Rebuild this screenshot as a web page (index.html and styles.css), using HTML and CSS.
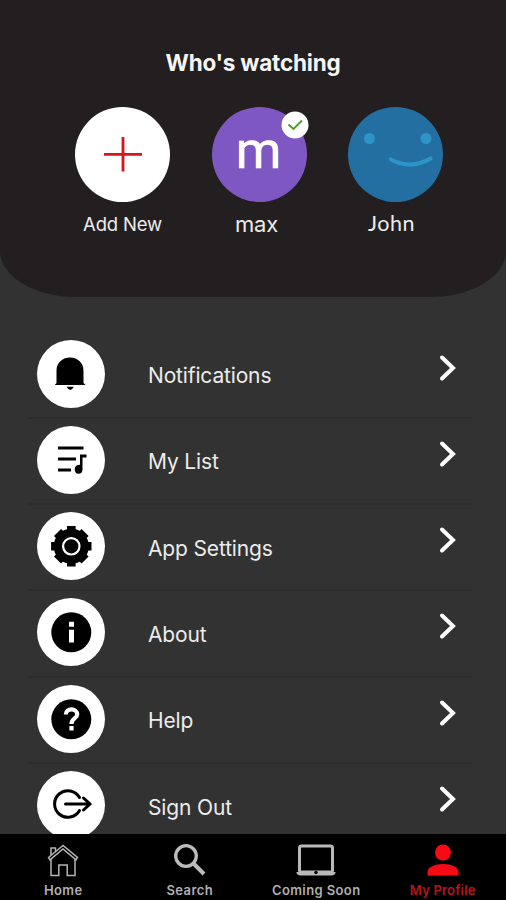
FILE: index.html
```html
<!DOCTYPE html>
<html lang="en">
    <head>
        <meta charset="UTF-8" />
        <meta name="viewport" content="width=device-width, initial-scale=1.0" />
        <title>My Profile</title>
        <link rel="stylesheet" href="styles.css">
    </head>
    <body>
        <header class="profiles">
            <h1 class="title">Who's watching</h1>
            <div class="profile-list">
                <div class="profile">
                    <div class="avatar add">
                        <svg width="40" height="36" viewBox="0 0 40 36"><path d="M1 17.300H39M20 0V34.500" stroke="#d8141c" stroke-width="2.800" /></svg>
                    </div>
                    <span class="name">Add New</span>
                </div>
                <div class="profile">
                    <div class="avatar max">
                        <span class="letter">m</span>
                        <svg class="badge" width="28" height="28" viewBox="0 0 28 28"><circle cx="14" cy="14" r="13.500" fill="#fff" /><path d="M7.500 13.500L12.500 18L21 9.500" fill="none" stroke="#4f9a2c" stroke-width="1.900" /></svg>
                    </div>
                    <span class="name name-max">max</span>
                </div>
                <div class="profile">
                    <div class="avatar john">
                        <svg width="95" height="95" viewBox="0 0 95 95"><g fill="#2e93c6"><circle cx="21.500" cy="31.500" r="5.500" /><circle cx="78" cy="31.500" r="5.500" /></g><path d="M43 52.500Q63 63 82.500 51.500" fill="none" stroke="#2e93c6" stroke-width="4.200" stroke-linecap="round" /></svg>
                    </div>
                    <span class="name name-john">John</span>
                </div>
            </div>
        </header>

        <ul class="menu">
            <li class="item">
                <span class="icon">
                    <svg width="68" height="68" viewBox="0 0 68 68"><path d="M19.500 43V31C19.500 22 26 17.500 33 17.500S46.500 22 46.500 31V43L48.500 45H17.800ZM29.500 46.800H37Q35 50 33.200 50T29.500 46.800Z" /></svg>
                </span>
                <span class="label">Notifications</span>
                <svg class="arrow" width="18" height="28" viewBox="0 0 18 28"><path d="M3 3.500L14 14L3 24.500" /></svg>
            </li>
            <li class="item">
                <span class="icon">
                    <svg width="68" height="68" viewBox="0 0 68 68"><path d="M21 22H46.500M21 33H39M21 44H34" fill="none" stroke="#000" stroke-width="2.800" /><path d="M43 28.500H49.500V31.500H45.500V43.500Q45.300 47.700 41.500 47.700T37.700 43Q38 38.800 43 38.700Z" /></svg>
                </span>
                <span class="label">My List</span>
                <svg class="arrow" width="18" height="28" viewBox="0 0 18 28"><path d="M3 3.500L14 14L3 24.500" /></svg>
            </li>
            <li class="item">
                <span class="icon">
                    <svg width="68" height="68" viewBox="0 0 68 68">
                        <g transform="translate(34.300 34.300)">
                            <circle r="17.600" />
                            <!-- teeth -->
                            <g stroke="#000" stroke-width="8.600" stroke-linecap="butt">
                                <path d="M0 -20.200V20.200M-20.200 0H20.200" />
                                <path d="M0 -19.500V19.500M-19.500 0H19.500" stroke-width="10" transform="rotate(45)" />
                            </g>
                            <circle r="8.200" stroke="#fff" stroke-width="2.200" />
                        </g>
                    </svg>
                </span>
                <span class="label">App Settings</span>
                <svg class="arrow" width="18" height="28" viewBox="0 0 18 28"><path d="M3 3.500L14 14L3 24.500" /></svg>
            </li>
            <li class="item">
                <span class="icon">
                    <svg width="68" height="68" viewBox="0 0 68 68"><circle cx="34.300" cy="34.300" r="20" /><path d="M34.500 23.800V28.800M34.500 31.800V44.500" stroke="#fff" stroke-width="5" /></svg>
                </span>
                <span class="label">About</span>
                <svg class="arrow" width="18" height="28" viewBox="0 0 18 28"><path d="M3 3.500L14 14L3 24.500" /></svg>
            </li>
            <li class="item">
                <span class="icon">
                    <svg width="68" height="68" viewBox="0 0 68 68"><circle cx="34.300" cy="34.300" r="20" /><path d="M28.800 29.500C28.800 22.500 40.200 23 40.200 29.500C40.200 33.500 34.500 33 34.500 39M34.500 41V45.500" fill="none" stroke="#fff" stroke-width="4.200" /></svg>
                </span>
                <span class="label">Help</span>
                <svg class="arrow" width="18" height="28" viewBox="0 0 18 28"><path d="M3 3.500L14 14L3 24.500" /></svg>
            </li>
            <li class="item">
                <span class="icon">
                    <svg width="68" height="68" viewBox="0 0 68 68"><path d="M42.500 26.500A13.300 13.300 0 1 0 42.500 39.500M28.500 33H53M46.500 27L53 33L46.500 39" fill="none" stroke="#000" stroke-width="3" stroke-linecap="round" /></svg>
                </span>
                <span class="label">Sign Out</span>
                <svg class="arrow" width="18" height="28" viewBox="0 0 18 28"><path d="M3 3.500L14 14L3 24.500" /></svg>
            </li>
        </ul>

        <nav class="tabs">
            <a class="tab">
                <svg width="40" height="36" viewBox="0 0 40 36"><g fill="none" stroke="#b5b5b5" stroke-width="1.500"><path d="M5.500 16.500L20 4.500L34.500 16.500L33 18.800L20 8L7 18.800Z" /><path d="M8 18V34.500H15.800V24H24.200V34.500H32V18M8 14V7H12.500V10" /></g></svg>
                <span>Home</span>
            </a>
            <a class="tab">
                <svg width="40" height="36" viewBox="0 0 40 36"><circle cx="16" cy="15" r="10.300" fill="none" stroke="#bcbcbc" stroke-width="3.300" /><path d="M23.500 22.500L34 33" stroke="#bcbcbc" stroke-width="4" /></svg>
                <span>Search</span>
            </a>
            <a class="tab">
                <svg width="40" height="36" viewBox="0 0 40 36"><rect x="3.500" y="5" width="33" height="26" rx="2" fill="none" stroke="#b9b9b9" stroke-width="3" /><path d="M.3 31H39.700Q39 34.500 35 34.500H5Q1 34.500 .3 31Z" fill="#b9b9b9" /><circle cx="20" cy="31.500" r="1.700" fill="#000" /></svg>
                <span>Coming Soon</span>
            </a>
            <a class="tab active">
                <svg width="40" height="36" viewBox="0 0 40 36"><g fill="#f80a15"><circle cx="20" cy="11.500" r="8" /><path d="M4.500 34.500V31C4.500 26 12 23 20 23S35.500 26 35.500 31V34.500Z" /></g></svg>
                <span>My Profile</span>
            </a>
        </nav>
    </body>
</html>
```
FILE: styles.css
```css
* {
    box-sizing: border-box;
}
body {
    margin: 0;
    height: 900px;
    overflow: hidden;
    display: flex;
    flex-direction: column;
    background: #323232;
    color: #ececec;
    font-family: Inter, "Liberation Sans", sans-serif;
}
svg {
    display: block;
    flex: none;
}

/* profiles */
.profiles {
    flex: none;
    height: 297px;
    padding-top: 48px;
    background: #231f20;
    border-radius: 0 0 76px 76px / 0 0 46px 46px;
}
.title {
    margin: 0;
    font-size: 22.5px;
    line-height: 29px;
    font-weight: 700;
    letter-spacing: -0.2px;
    text-align: center;
    color: #f5f5f5;
}
.profile-list {
    display: flex;
    justify-content: center;
    gap: 41.5px;
    margin-top: 30px;
    margin-left: 12px;
}
.profile {
    width: 95px;
    display: flex;
    flex-direction: column;
    align-items: center;
}
.avatar {
    position: relative;
    width: 95px;
    height: 95px;
    border-radius: 50%;
    display: flex;
    align-items: center;
    justify-content: center;
}
.add {
    background: #fff;
}
.max {
    background: #7e57c2;
}
.john {
    background: #236fa1;
}
.letter {
    color: #fff;
    font-family: Roboto, sans-serif;
    font-size: 52px;
    font-weight: 400;
    line-height: 60px;
    padding: 0 1px 7px 0;
    -webkit-text-stroke: 0.7px #fff;
}
.badge {
    position: absolute;
    top: 4px;
    right: -2px;
}
.name {
    margin-top: 9px;
    font-size: 18.5px;
    line-height: 26px;
    letter-spacing: -0.2px;
}
.name-max {
    font-size: 22px;
    padding-right: 5px;
}
.name-john {
    margin-top: 8px;
    font-family: Lato, sans-serif;
    font-size: 21.5px;
    letter-spacing: 0.5px;
    padding-right: 8px;
}

/* menu */
.menu {
    flex: 1;
    min-height: 0;
    overflow: hidden;
    list-style: none;
    margin: 0;
    padding: 35.6px 34px 0 28px;
}
.item {
    display: flex;
    align-items: flex-start;
    height: 86.3px;
    padding: 7px 15px 0 9px;
    border-bottom: 2px solid #2d2d2d;
}
.icon {
    width: 68px;
    height: 68px;
    border-radius: 50%;
    background: #fff;
}
.label {
    flex: 1;
    margin: 21.6px 0 0 43px;
    font-size: 21px;
    line-height: 30px;
    letter-spacing: -0.15px;
}
.arrow {
    margin-top: 14px;
    fill: none;
    stroke: #fff;
    stroke-width: 4;
    stroke-linecap: round;
}

/* bottom tabs */
.tabs {
    flex: none;
    display: flex;
    height: 66px;
    background: #000;
}
.tab {
    flex: 1;
    display: flex;
    flex-direction: column;
    align-items: center;
    padding-top: 7px;
    color: #b0b0b0;
    font-size: 13px;
    font-weight: 600;
    line-height: 16px;
    letter-spacing: 0.4px;
    gap: 5px;
    white-space: nowrap;
}
.active {
    color: #b8141d;
    letter-spacing: 0.2px;
}
```
